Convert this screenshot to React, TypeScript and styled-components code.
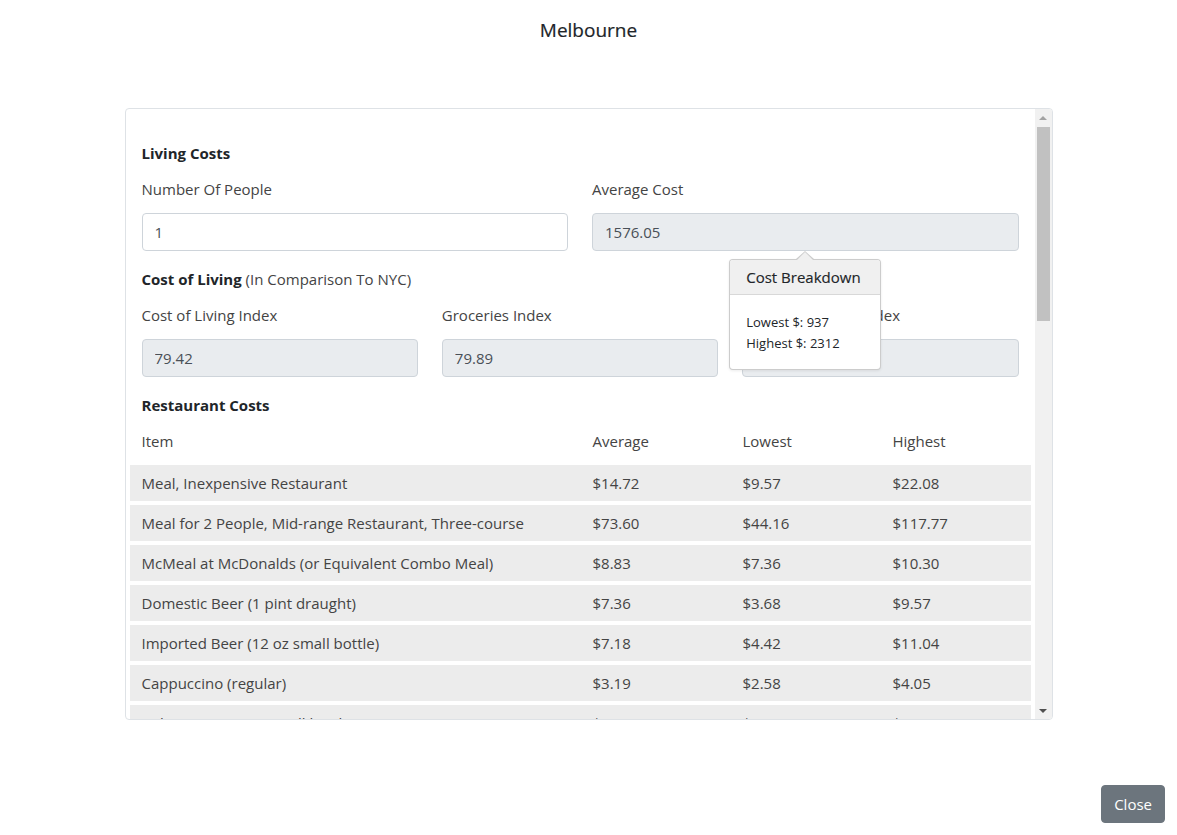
import styled, { createGlobalStyle } from 'styled-components';

const GlobalStyle = createGlobalStyle`
  html, body {
    margin: 0;
    padding: 0;
    background: #ffffff;
  }
  body {
    font-family: 'Open Sans', 'Noto Sans', 'Liberation Sans', sans-serif;
    font-size: 15px;
    color: #212529;
  }
  * {
    box-sizing: border-box;
  }
`;

const Page = styled.div`
  height: 835px;
  display: flex;
  flex-direction: column;
`;

const Header = styled.header`
  height: 60px;
  display: flex;
  align-items: center;
  justify-content: center;
`;

const Title = styled.h5`
  margin: 0;
  font-size: 19px;
  font-weight: 500;
  line-height: 24px;
  color: #212529;
  -webkit-text-stroke: 0.2px #212529;
`;

const Body = styled.div`
  flex: 1;
  padding-top: 48px;
`;

const ScrollBox = styled.div`
  width: 928px;
  height: 612px;
  margin: 0 auto;
  border: 1px solid #dee2e6;
  border-radius: 4px;
  display: flex;
  overflow: hidden;
`;

const Viewport = styled.div`
  flex: 1;
  min-width: 0;
  overflow: hidden;
  padding: 32px 16px 16px 16px;
`;

const Scrollbar = styled.div`
  width: 17px;
  flex: none;
  display: flex;
  flex-direction: column;
  background: #f1f1f1;
`;

const ArrowButton = styled.div<{ dir: 'up' | 'down' }>`
  height: 17px;
  display: flex;
  align-items: center;
  justify-content: center;

  &::before {
    content: '';
    width: 0;
    height: 0;
    border-left: 4px solid transparent;
    border-right: 4px solid transparent;
    ${(p) =>
      p.dir === 'up'
        ? 'border-bottom: 4px solid #a3a3a3;'
        : 'border-top: 4px solid #505050;'}
  }
`;

const Track = styled.div`
  flex: 1;
  padding: 1px 2px;
`;

const Thumb = styled.div`
  height: 194px;
  background: #c1c1c1;
`;

const SectionTitle = styled.div`
  font-weight: 700;
  line-height: 24px;
  margin-bottom: 12px;
  color: #212529;

  span {
    font-weight: 400;
    color: #444;
  }
`;

const FieldRow = styled.div<{ cols: number }>`
  display: grid;
  grid-template-columns: repeat(${(p) => p.cols}, 1fr);
  column-gap: 24px;
  margin-bottom: 16px;
`;

const Field = styled.div`
  position: relative;
  display: flex;
  flex-direction: column;
`;

const Label = styled.label`
  line-height: 24px;
  margin-bottom: 12px;
  color: #444;
`;

const Input = styled.input`
  height: 38px;
  padding: 6px 12px;
  font-family: inherit;
  font-size: 15px;
  color: #495057;
  background: ${(p) => (p.readOnly ? '#e9ecef' : '#ffffff')};
  border: 1px solid #ced4da;
  border-radius: 4px;
  outline: none;
`;

const Popover = styled.div`
  position: absolute;
  top: calc(100% + 8px);
  left: 50%;
  transform: translateX(-50%);
  width: 152px;
  background: #ffffff;
  border: 1px solid rgba(0, 0, 0, 0.2);
  border-radius: 4px;
  box-shadow: 0 1px 3px rgba(0, 0, 0, 0.08);
  z-index: 5;

  &::before,
  &::after {
    content: '';
    position: absolute;
    left: 50%;
    transform: translateX(-50%);
    border-style: solid;
    border-color: transparent;
  }
  &::before {
    top: -9px;
    border-width: 0 9px 8px 9px;
    border-bottom-color: rgba(0, 0, 0, 0.2);
  }
  &::after {
    top: -8px;
    border-width: 0 8px 8px 8px;
    border-bottom-color: #f0f0f0;
  }
`;

const PopoverHeader = styled.div`
  padding: 0 16px;
  height: 35px;
  display: flex;
  align-items: center;
  background: #f0f0f0;
  border-bottom: 1px solid #d8d8d8;
  border-radius: 3px 3px 0 0;
  font-size: 15px;
  font-weight: 500;
  color: #212529;
  -webkit-text-stroke: 0.15px #212529;
`;

const PopoverBody = styled.div`
  padding: 17px 16px 15px;
  font-size: 13px;
  line-height: 21px;
  color: #212529;
`;

const Table = styled.table`
  width: 901px;
  margin: -4px 0 12px -12px;
  border-collapse: separate;
  border-spacing: 0 4px;
  color: #444;
`;

const Th = styled.th<{ w: number }>`
  width: ${(p) => p.w}px;
  text-align: left;
  font-weight: 400;
  line-height: 24px;
  padding: 0 12px 8px;
`;

const Td = styled.td`
  height: 36px;
  padding: 0 12px;
  line-height: 24px;
  background: #ececec;
`;

type Cost = [string, string, string, string];

const restaurant: Cost[] = [
  ['Meal, Inexpensive Restaurant', '$14.72', '$9.57', '$22.08'],
  ['Meal for 2 People, Mid-range Restaurant, Three-course', '$73.60', '$44.16', '$117.77'],
  ['McMeal at McDonalds (or Equivalent Combo Meal)', '$8.83', '$7.36', '$10.30'],
  ['Domestic Beer (1 pint draught)', '$7.36', '$3.68', '$9.57'],
  ['Imported Beer (12 oz small bottle)', '$7.18', '$4.42', '$11.04'],
  ['Cappuccino (regular)', '$3.19', '$2.58', '$4.05'],
  ['Coke/Pepsi (12 oz small bottle)', '$2.30', '$1.47', '$3.31'],
  ['Water (12 oz small bottle)', '$1.81', '$1.10', '$2.58'],
];

const markets: Cost[] = [
  ['Milk (regular), (1 gallon)', '$4.32', '$3.35', '$6.96'],
  ['Loaf of Fresh White Bread (1 lb)', '$2.04', '$1.00', '$3.34'],
  ['Rice (white), (1 lb)', '$1.05', '$0.60', '$2.00'],
  ['Eggs (regular) (12)', '$3.61', '$2.57', '$5.15'],
  ['Local Cheese (1 lb)', '$5.25', '$3.01', '$9.01'],
  ['Chicken Fillets (1 lb)', '$3.61', '$2.34', '$5.01'],
  ['Beef Round (1 lb) (or Equivalent Back Leg Red Meat)', '$6.16', '$4.34', '$8.01'],
  ['Apples (1 lb)', '$1.81', '$1.00', '$2.67'],
  ['Banana (1 lb)', '$1.35', '$0.87', '$2.00'],
  ['Oranges (1 lb)', '$1.56', '$0.87', '$2.67'],
  ['Tomato (1 lb)', '$2.20', '$1.00', '$3.34'],
  ['Potato (1 lb)', '$1.08', '$0.60', '$2.00'],
];

const CostTable = ({ rows }: { rows: Cost[] }) => (
  <Table>
    <thead>
      <tr>
        <Th w={451}>Item</Th>
        <Th w={150}>Average</Th>
        <Th w={150}>Lowest</Th>
        <Th w={150}>Highest</Th>
      </tr>
    </thead>
    <tbody>
      {rows.map((r) => (
        <tr key={r[0]}>
          {r.map((c, i) => (
            <Td key={i}>{c}</Td>
          ))}
        </tr>
      ))}
    </tbody>
  </Table>
);

const Footer = styled.footer`
  display: flex;
  justify-content: flex-end;
  padding: 0 12px 12px;
`;

const CloseButton = styled.button`
  height: 38px;
  padding: 0 12px;
  font-family: inherit;
  font-size: 15px;
  color: #ffffff;
  background: #6c757d;
  border: 1px solid #6c757d;
  border-radius: 4px;
  cursor: pointer;
`;

const App = () => (
  <Page>
    <GlobalStyle />
    <Header>
      <Title>Melbourne</Title>
    </Header>
    <Body>
      <ScrollBox>
        <Viewport>
          <SectionTitle>Living Costs</SectionTitle>
          <FieldRow cols={2}>
            <Field>
              <Label>Number Of People</Label>
              <Input defaultValue="1" />
            </Field>
            <Field>
              <Label>Average Cost</Label>
              <Input readOnly value="1576.05" />
              <Popover>
                <PopoverHeader>Cost Breakdown</PopoverHeader>
                <PopoverBody>
                  Lowest $: 937
                  <br />
                  Highest $: 2312
                </PopoverBody>
              </Popover>
            </Field>
          </FieldRow>

          <SectionTitle>
            Cost of Living <span>(In Comparison To NYC)</span>
          </SectionTitle>
          <FieldRow cols={3}>
            <Field>
              <Label>Cost of Living Index</Label>
              <Input readOnly value="79.42" />
            </Field>
            <Field>
              <Label>Groceries Index</Label>
              <Input readOnly value="79.89" />
            </Field>
            <Field>
              <Label>Restaurant Price Index</Label>
              <Input readOnly value="73.96" />
            </Field>
          </FieldRow>

          <SectionTitle>Restaurant Costs</SectionTitle>
          <CostTable rows={restaurant} />

          <SectionTitle>Market Costs</SectionTitle>
          <CostTable rows={markets} />
        </Viewport>
        <Scrollbar>
          <ArrowButton dir="up" />
          <Track>
            <Thumb />
          </Track>
          <ArrowButton dir="down" />
        </Scrollbar>
      </ScrollBox>
    </Body>
    <Footer>
      <CloseButton>Close</CloseButton>
    </Footer>
  </Page>
);

export default App;
